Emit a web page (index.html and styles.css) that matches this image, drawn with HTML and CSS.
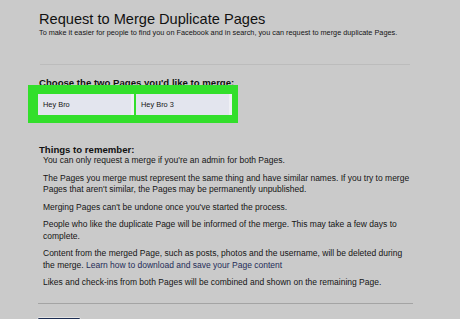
FILE: index.html
```html
<!DOCTYPE html>
<html lang="en">
<head>
    <meta charset="UTF-8">
    <meta name="viewport" content="width=device-width, initial-scale=1.0">
    <title>Merge Pages</title>
    <link rel="stylesheet" href="styles.css">
</head>
<body>
    <div class="container">
        <h1>Request to Merge Duplicate Pages</h1>
        <p class="intro">To make it easier for people to find you on Facebook and in search, you can request to merge duplicate Pages.</p>
        <hr class="divider">

        <h2 class="choose">Choose the two Pages you'd like to merge:</h2>
        <div class="highlight">
            <div class="page-input">Hey Bro</div>
            <div class="page-input">Hey Bro 3</div>
        </div>

        <h2 class="remember">Things to remember:</h2>
        <div class="notes">
            <p class="first">You can only request a merge if you're an admin for both Pages.</p>
            <p>The Pages you merge must represent the same thing and have similar names. If you try to merge Pages that aren't similar, the Pages may be permanently unpublished.</p>
            <p>Merging Pages can't be undone once you've started the process.</p>
            <p>People who like the duplicate Page will be informed of the merge. This may take a few days to complete.</p>
            <p>Content from the merged Page, such as posts, photos and the username, will be deleted during the merge. <a href="#">Learn how to download and save your Page content</a></p>
            <p>Likes and check-ins from both Pages will be combined and shown on the remaining Page.</p>
        </div>
        <hr class="divider bottom">
        <button class="continue"></button>
    </div>
</body>
</html>
```

FILE: styles.css
```css
body {
    margin: 0;
    padding: 0;
    background-color: #cacaca;
    font-family: "Liberation Sans", Arial, sans-serif;
    color: #151515;
    overflow: hidden;
}
.container {
    padding: 11px 0 0 39px;
    width: 374px;
}
h1 {
    margin: 0;
    font-size: 14.6px;
    line-height: 16px;
    font-weight: normal;
    color: #111;
}
.intro {
    margin: 1px 0 0;
    font-size: 7.3px;
    line-height: 9px;
}
.divider {
    margin: 27px 0 0 1px;
    width: 370px;
    border: none;
    border-top: 1px solid #bcbcbc;
}
.divider.bottom {
    margin: 14px 0 0 -1px;
    width: 375px;
    border-top-color: #a4a4a4;
}
h2 {
    margin: 0;
    font-size: 9.6px;
    line-height: 11px;
    font-weight: bold;
    color: #111;
}
.choose {
    margin-top: 12px;
}
.highlight {
    position: relative;
    z-index: 1;
    display: flex;
    gap: 5px;
    width: 191px;
    margin: -3px 0 0 -11px;
    padding: 9px 9px 8px 10px;
    background: #32df2b;
}
.page-input {
    flex: 1;
    height: 21px;
    line-height: 21px;
    padding-left: 5px;
    font-size: 7.4px;
    background: #e3e5ee;
    box-shadow: 3px 0 0 #eff0f4;
}
.remember {
    margin-top: 21px;
}
.notes {
    padding-left: 4px;
}
.notes p {
    margin: 6px 0 0;
    font-size: 8.5px;
    line-height: 11.5px;
}
.notes p.first {
    margin-top: 0;
}
.notes a {
    color: #1f2c58;
    text-decoration: none;
}
.continue {
    display: block;
    margin: 13px 0 0 -2px;
    width: 44px;
    height: 20px;
    background: #1d2d52;
    border: 1px solid #e4e4e4;
    border-radius: 2px;
}
```
